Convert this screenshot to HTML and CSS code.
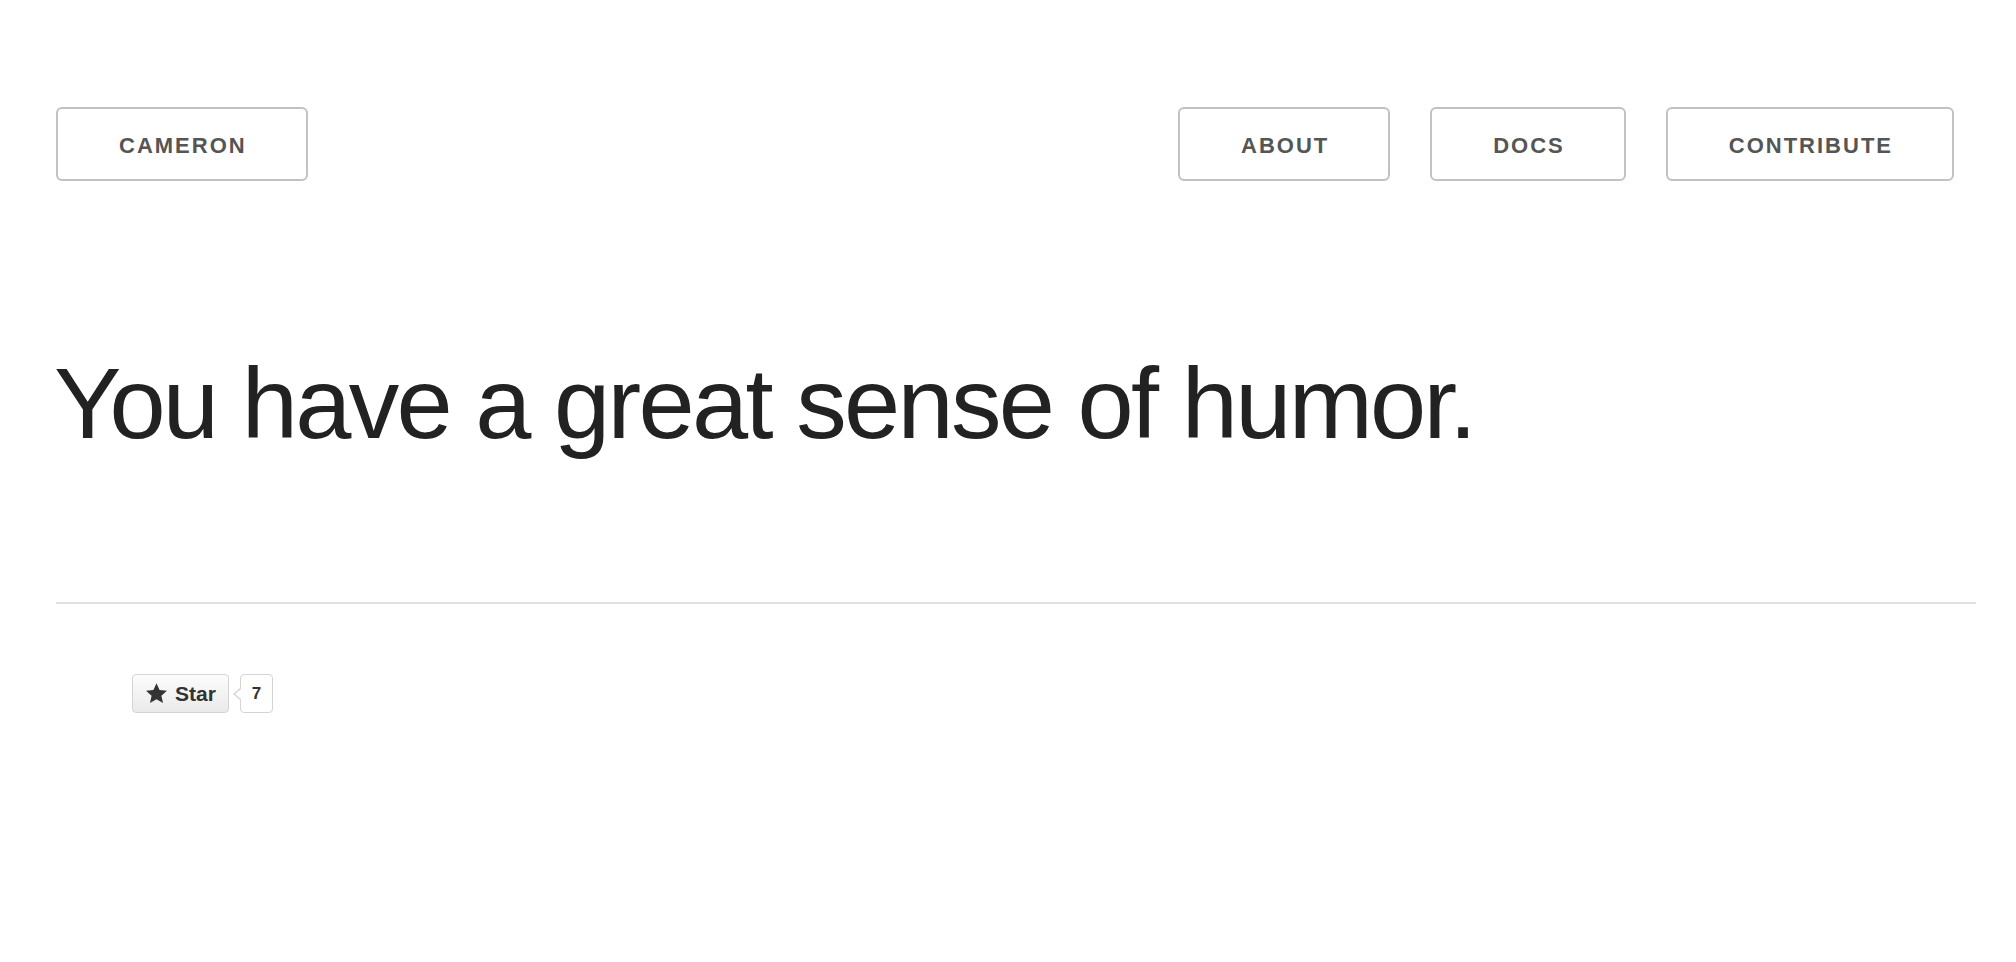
FILE: index.html
```html
<!DOCTYPE html>
<html>
<head>
<meta charset="utf-8">
<link rel="stylesheet" href="styles.css">
</head>
<body>
<div class="page">
  <header class="nav">
    <a class="btn" href="#">Cameron</a>
    <nav class="nav-right">
      <a class="btn" href="#">About</a>
      <a class="btn" href="#">Docs</a>
      <a class="btn" href="#">Contribute</a>
    </nav>
  </header>
  <main class="hero">
    <h1 class="title">You have a great sense of humor.</h1>
  </main>
  <hr class="rule">
  <footer class="footer">
    <div class="gh">
      <a class="gh-btn" href="#">
        <svg class="gh-star" viewBox="0 0 24 24" aria-hidden="true"><path d="M12 1.2l3.2 7.1 7.7.8-5.8 5.2 1.7 7.6L12 18l-6.8 3.9 1.7-7.6-5.8-5.2 7.7-.8z"/></svg>
        <span class="gh-text">Star</span>
      </a>
      <a class="gh-count" href="#">7</a>
    </div>
  </footer>
</div>
</body>
</html>
```

FILE: styles.css
```css
html, body {
  margin: 0;
  padding: 0;
  background: #fff;
}
body {
  font-family: "Liberation Sans", Arial, Helvetica, sans-serif;
  color: #222;
}
.page {
  padding: 107px 40px 0 56px;
}
.nav {
  display: flex;
  justify-content: space-between;
  align-items: center;
  padding-right: 22px;
}
.nav-right {
  display: flex;
  gap: 40px;
}
.btn {
  display: flex;
  align-items: center;
  justify-content: center;
  box-sizing: border-box;
  height: 74px;
  padding: 3px 59px 0 61px;
  border: 2px solid #c2c2c2;
  border-radius: 6px;
  color: #555;
  font-size: 22px;
  font-weight: bold;
  letter-spacing: 2px;
  text-transform: uppercase;
  text-decoration: none;
}
.hero {
  padding-top: 167px;
}
.title {
  margin: 0 0 0 -2px;
  font-size: 101px;
  line-height: 110px;
  font-weight: normal;
  color: #222;
  letter-spacing: -2.7px;
}
.rule {
  margin: 144px 0 0 0;
  border: 0;
  height: 2px;
  background: #e0e0e0;
}
.footer {
  padding: 70px 0 0 76px;
}
.gh {
  display: flex;
  align-items: center;
}
.gh-btn {
  display: flex;
  align-items: center;
  box-sizing: border-box;
  height: 39px;
  width: 97px;
  padding: 0 0 0 12px;
  border: 1.5px solid #d4d4d4;
  border-radius: 4px;
  background: linear-gradient(#fcfcfc, #eaeaea);
  color: #333;
  text-decoration: none;
}
.gh-star {
  width: 23px;
  height: 23px;
  fill: #333;
  margin-right: 7px;
}
.gh-text {
  font-size: 21px;
  font-weight: bold;
  color: #333;
}
.gh-count {
  position: relative;
  display: flex;
  align-items: center;
  justify-content: center;
  box-sizing: border-box;
  height: 39px;
  width: 33px;
  margin-left: 11px;
  border: 1.5px solid #d4d4d4;
  border-radius: 4px;
  background: #fff;
  color: #333;
  font-size: 17px;
  font-weight: bold;
  text-decoration: none;
}
.gh-count::before,
.gh-count::after {
  content: "";
  position: absolute;
  top: 50%;
  width: 0;
  height: 0;
  border-style: solid;
  border-color: transparent;
}
.gh-count::before {
  left: -8px;
  margin-top: -6px;
  border-width: 6px 7px 6px 0;
  border-right-color: #d4d4d4;
}
.gh-count::after {
  left: -6px;
  margin-top: -5px;
  border-width: 5px 6px 5px 0;
  border-right-color: #fff;
}
```
